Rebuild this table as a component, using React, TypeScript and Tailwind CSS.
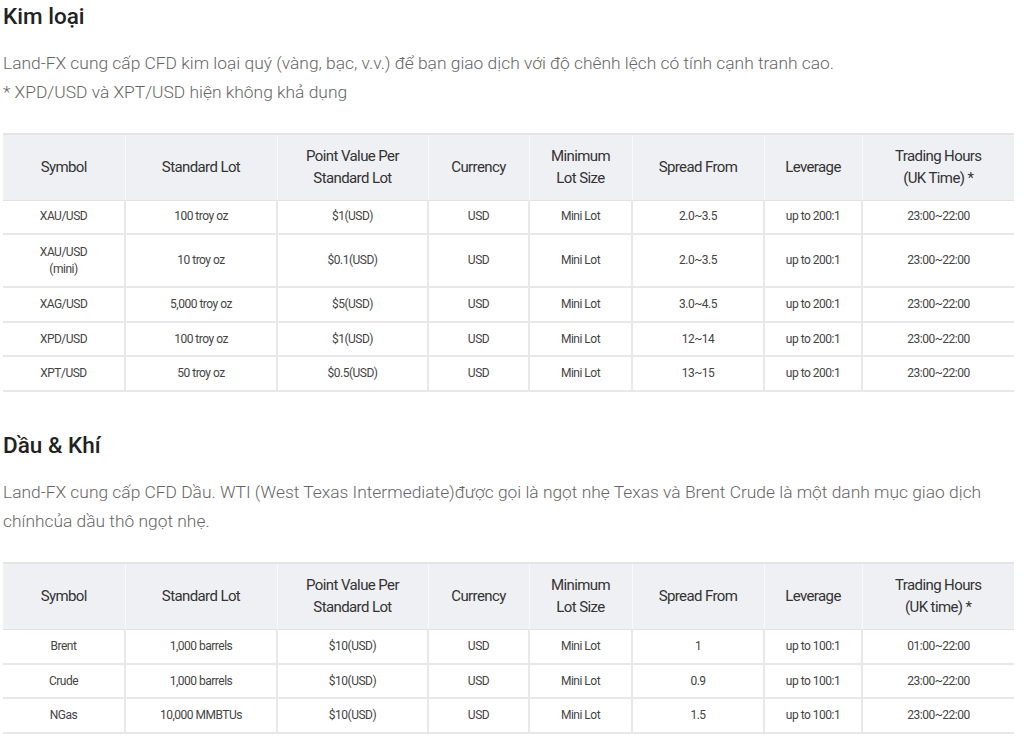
import React from "react";

type Row = string[];

const cols = [
  "w-[122px]",
  "w-[152px]",
  "w-[151px]",
  "w-[101px]",
  "w-[103px]",
  "w-[132px]",
  "w-[98px]",
  "w-[152px]",
];

const metalRows: Row[] = [
  ["XAU/USD", "100 troy oz", "$1(USD)", "USD", "Mini Lot", "2.0~3.5", "up to 200:1", "23:00~22:00"],
  ["XAU/USD\n(mini)", "10 troy oz", "$0.1(USD)", "USD", "Mini Lot", "2.0~3.5", "up to 200:1", "23:00~22:00"],
  ["XAG/USD", "5,000 troy oz", "$5(USD)", "USD", "Mini Lot", "3.0~4.5", "up to 200:1", "23:00~22:00"],
  ["XPD/USD", "100 troy oz", "$1(USD)", "USD", "Mini Lot", "12~14", "up to 200:1", "23:00~22:00"],
  ["XPT/USD", "50 troy oz", "$0.5(USD)", "USD", "Mini Lot", "13~15", "up to 200:1", "23:00~22:00"],
];

const oilRows: Row[] = [
  ["Brent", "1,000 barrels", "$10(USD)", "USD", "Mini Lot", "1", "up to 100:1", "01:00~22:00"],
  ["Crude", "1,000 barrels", "$10(USD)", "USD", "Mini Lot", "0.9", "up to 100:1", "23:00~22:00"],
  ["NGas", "10,000 MMBTUs", "$10(USD)", "USD", "Mini Lot", "1.5", "up to 100:1", "23:00~22:00"],
];

function SpecTable({
  rows,
  heights,
  hoursLabel,
}: {
  rows: Row[];
  heights: string[];
  hoursLabel: string;
}) {
  const headers = [
    "Symbol",
    "Standard Lot",
    "Point Value Per\nStandard Lot",
    "Currency",
    "Minimum\nLot Size",
    "Spread From",
    "Leverage",
    `Trading Hours\n${hoursLabel} *`,
  ];
  return (
    <table className="w-[1011px] table-fixed border-collapse text-center">
      <thead>
        <tr className="bg-[#eff0f4] border-t-2 border-[#e4e4e6]">
          {headers.map((h, i) => (
            <th
              key={i}
              className={`${cols[i]} h-[66px] font-normal text-[15px] leading-[22px] tracking-[-0.6px] text-[#333] whitespace-pre-line border-b border-[#e2e2e4] ${
                i > 0 ? "border-l border-l-[#fafafa]" : ""
              }`}
            >
              {h}
            </th>
          ))}
        </tr>
      </thead>
      <tbody>
        {rows.map((r, ri) => (
          <tr key={ri} className="border-b-2 border-[#e8e8e8]">
            {r.map((c, ci) => (
              <td
                key={ci}
                className={`${heights[ri]} text-[12px] leading-[17px] tracking-[-0.5px] text-[#444] whitespace-pre-line ${
                  ci > 0 ? "border-l-2 border-[#e8e8e8]" : ""
                }`}
              >
                {c}
              </td>
            ))}
          </tr>
        ))}
      </tbody>
    </table>
  );
}

export default function App() {
  return (
    <div className="min-h-[739px] bg-white px-[3px] font-['Roboto',sans-serif]">
      {/* Metals */}
      <h2 className="pt-[2px] text-[22.5px] leading-[28px] font-medium text-[#222]">Kim loại</h2>
      <p className="mt-[19px] text-[17.4px] leading-[29px] font-light text-[#666]">
        Land-FX cung cấp CFD kim loại quý (vàng, bạc, v.v.) để bạn giao dịch với độ chênh lệch có tính cạnh tranh cao.
        <br />* XPD/USD và XPT/USD hiện không khả dụng
      </p>
      <div className="mt-[26px]">
        <SpecTable
          rows={metalRows}
          heights={["h-[34px]", "h-[53px]", "h-[35px]", "h-[34px]", "h-[35px]"]}
          hoursLabel="(UK Time)"
        />
      </div>

      {/* Oil & gas */}
      <h2 className="mt-[39px] text-[22.5px] leading-[28px] font-medium text-[#222]">Dầu &amp; Khí</h2>
      <p className="mt-[19px] w-[1000px] text-[17.4px] leading-[29px] font-light text-[#666]">
        Land-FX cung cấp CFD Dầu. WTI (West Texas Intermediate)được gọi là ngọt nhẹ Texas và Brent Crude là một danh mục giao dịch chínhcủa dầu thô ngọt nhẹ.
      </p>
      <div className="mt-[26px]">
        <SpecTable
          rows={oilRows}
          heights={["h-[35px]", "h-[34px]", "h-[35px]"]}
          hoursLabel="(UK time)"
        />
      </div>
    </div>
  );
}
